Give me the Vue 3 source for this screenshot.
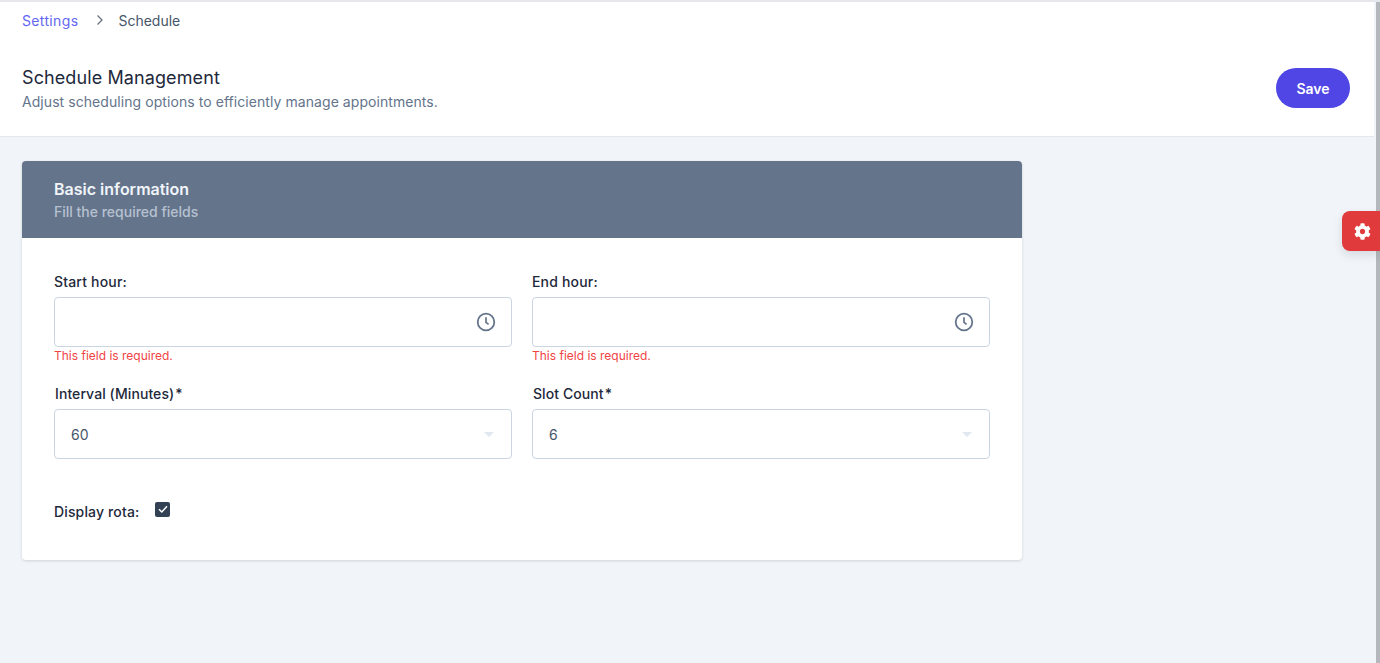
<template>
  <div class="page">
    <main class="main">
      <header class="top">
        <nav class="crumbs">
          <a class="crumb-link">Settings</a>
          <svg class="chev" width="12" height="12" viewBox="0 0 12 12" fill="none"><path d="M3.500 1.500 8 6l-4.500 4.500" stroke="#6b7280" stroke-width="1.300"/></svg>
          <span class="crumb-current">Schedule</span>
        </nav>
        <div class="title-row">
          <div>
            <h1>Schedule Management</h1>
            <p>Adjust scheduling options to efficiently manage appointments.</p>
          </div>
          <button class="save">Save</button>
        </div>
      </header>
      <section class="content">
        <div class="card">
          <div class="card-head">
            <h2>Basic information</h2>
            <p>Fill the required fields</p>
          </div>
          <div class="card-body">
            <div class="grid">
              <div class="field" v-for="f in timeFields" :key="f">
                <label>{{ f }}</label>
                <div class="control">
                  <svg class="clock" width="20" height="20" viewBox="0 0 20 20" fill="none"><circle cx="10" cy="10" r="8.300" stroke="#64748b" stroke-width="1.800"/><path d="M10 5.200V10.400l2.600 2" stroke="#64748b" stroke-width="1.700"/></svg>
                </div>
                <div class="error">This field is required.</div>
              </div>
              <div class="field sel" v-for="s in selects" :key="s.label">
                <label>{{ s.label }}<span class="star">*</span></label>
                <div class="control">
                  <span class="value">{{ s.value }}</span>
                  <span class="caret"></span>
                </div>
              </div>
            </div>
            <div class="rota">
              <span>Display rota:</span>
              <span class="check">
                <svg width="14" height="14" viewBox="0 0 14 14" fill="none"><path d="M3 7.300 5.800 10 11 4.200" stroke="#fff" stroke-width="1.500"/></svg>
              </span>
            </div>
          </div>
        </div>
      </section>
    </main>
    <div class="fab">
      <svg width="17" height="17" viewBox="0 0 512 512" fill="#fff"><path d="M487.400 315.700l-42.600-24.600c4.300-23.200 4.300-47 0-70.200l42.600-24.600c4.900-2.800 7.100-8.600 5.500-14-11.100-35.600-30-67.800-54.700-94.600-3.800-4.100-10-5.100-14.800-2.300L380.800 110c-17.900-15.400-38.500-27.300-60.800-35.100V25.800c0-5.600-3.900-10.500-9.400-11.700-36.700-8.200-74.300-7.800-109.200 0-5.500 1.200-9.400 6.100-9.400 11.700V75c-22.200 7.900-42.800 19.800-60.800 35.100L88.700 85.500c-4.900-2.800-11-1.900-14.800 2.300-24.700 26.700-43.600 58.900-54.700 94.600-1.700 5.400.6 11.200 5.500 14L67.300 221c-4.300 23.200-4.300 47 0 70.200l-42.600 24.600c-4.900 2.800-7.100 8.600-5.500 14 11.100 35.600 30 67.800 54.700 94.600 3.800 4.100 10 5.100 14.800 2.300l42.600-24.600c17.900 15.400 38.500 27.300 60.800 35.100v49.200c0 5.600 3.900 10.500 9.400 11.700 36.700 8.200 74.300 7.800 109.200 0 5.500-1.200 9.400-6.100 9.400-11.700v-49.200c22.200-7.900 42.800-19.800 60.800-35.100l42.600 24.600c4.900 2.800 11 1.900 14.800-2.300 24.700-26.700 43.600-58.900 54.700-94.600 1.500-5.500-.7-11.300-5.600-14.100zM256 336c-44.100 0-80-35.900-80-80s35.900-80 80-80 80 35.900 80 80-35.900 80-80 80z"/></svg>
    </div>
    <div class="scrollbar"></div>
  </div>
</template>

<script setup>
const timeFields = ['Start hour:', 'End hour:']
const selects = [
  { label: 'Interval (Minutes)', value: '60' },
  { label: 'Slot Count', value: '6' }
]
</script>

<style>
html, body { margin: 0; background: #f1f5f9; overflow: hidden; }
</style>

<style scoped>
.page {
  height: 663px;
  position: relative;
  overflow: hidden;
  background: #f1f5f9;
  font-family: Inter, "Noto Sans", sans-serif;
  color: #1e293b;
  border-top: 2px solid #e5e7eb;
  box-sizing: border-box;
}
.main { width: 1374px; }
.top {
  background: #fff;
  border-bottom: 1px solid #e2e8f0;
  height: 135px;
  box-sizing: border-box;
  padding: 0 24px 0 22px;
}
.crumbs { display: flex; align-items: center; height: 36px; font-size: 14px; }
.crumb-link { color: #6366f1; letter-spacing: .35px; }
.chev { margin: 0 12px 0 16px; }
.crumb-current { color: #475569; }
.title-row { display: flex; justify-content: space-between; align-items: center; padding-top: 27px; }
h1 { margin: 0; font-size: 18px; font-weight: 400; line-height: 26px; color: #1e293b; letter-spacing: .1px; }
.title-row p { margin: 0; font-size: 14px; line-height: 22px; color: #64748b; letter-spacing: .065px; }
.save {
  width: 74px; height: 40px; border: 0; border-radius: 20px; margin-top: -2px;
  background: #4f46e5; color: #fff; font: 600 14px Inter, sans-serif;
}
.content { padding: 24px 22px; }
.card {
  width: 1000px; background: #fff; border-radius: 4px; overflow: hidden;
  box-shadow: 0 1px 3px rgba(15, 23, 42, .15);
}
.card-head { background: #64748b; height: 77px; box-sizing: border-box; padding: 17px 32px 0; }
h2 { margin: 0; font-size: 16px; line-height: 22px; font-weight: 600; color: #f1f5f9; }
.card-head p { margin: 2px 0 0; font-size: 14px; line-height: 20px; font-weight: 500; color: #cbd5e1; opacity: .8; }
.card-body { padding: 34px 32px 38px; }
.grid { display: grid; grid-template-columns: 458px 458px; column-gap: 20px; }
label { display: block; font-size: 14px; line-height: 20px; font-weight: 500; margin-bottom: 5px; color: #1e293b; letter-spacing: .18px; }
.sel label { padding-left: 1px; letter-spacing: .08px; }
.sel { margin-top: -1px; }
.star { margin-left: 1px; }
.control {
  height: 50px; box-sizing: border-box; border: 1px solid #cbd5e1; border-radius: 4px;
  display: flex; align-items: center; justify-content: space-between; padding: 0 16px;
  background: #fff;
}
.clock { margin-left: auto; position: relative; left: 1px; }
.error { height: 38px; box-sizing: border-box; padding-top: 1px; font-size: 12px; line-height: 16px; color: #ef4444; }
.value { font-size: 14px; color: #475569; }
.caret {
  width: 0; height: 0; border-left: 5px solid transparent; border-right: 5px solid transparent;
  border-top: 5px solid #e2e8f0; margin-right: 1px;
}
.rota { display: flex; align-items: center; margin-top: 41px; font-size: 14px; font-weight: 500; height: 22px; letter-spacing: .15px; }
.check {
  width: 15px; height: 15px; margin-left: 16px; background: #334155; border-radius: 2px;
  display: flex; align-items: center; justify-content: center; position: relative; top: -2px;
}
.fab {
  position: absolute; right: 0; top: 209px; width: 38px; height: 40px;
  background: #e13a3c; border-radius: 8px 0 0 8px; display: flex; align-items: center; justify-content: center;
  box-shadow: 0 4px 10px rgba(15, 23, 42, .12);
  padding-left: 2px; box-sizing: border-box; z-index: 2;
}
.scrollbar { position: absolute; right: 0; top: 0; bottom: 0; width: 4px; background: #b4b8bc; }
</style>
